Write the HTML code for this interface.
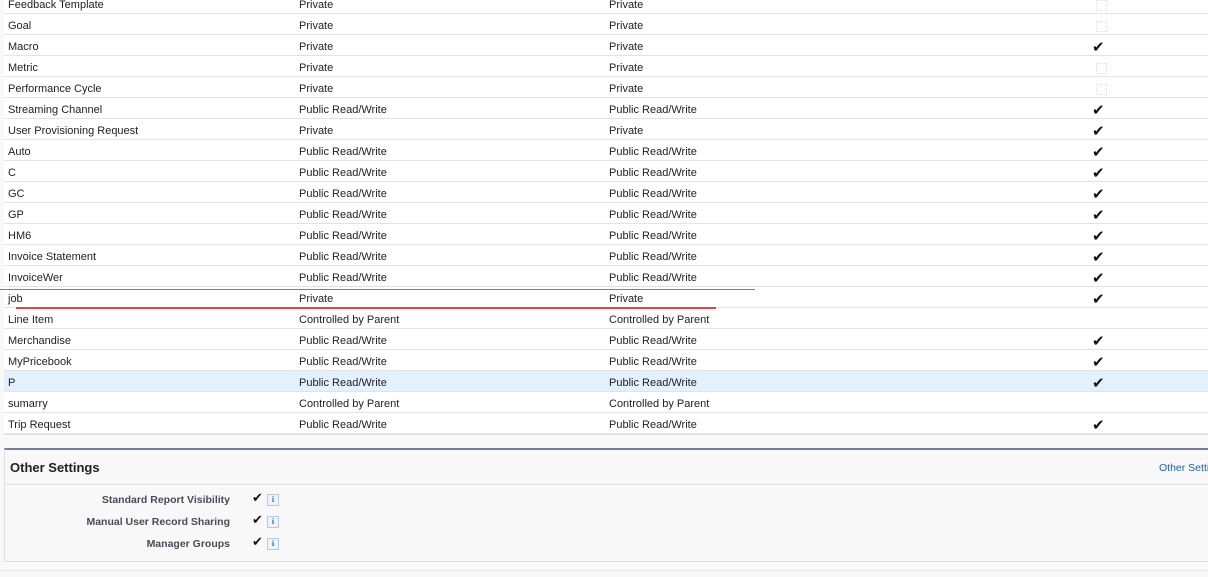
<!DOCTYPE html>
<html><head><meta charset="utf-8"><style>
body{margin:0;width:1208px;height:577px;background:#f8f8f8;font-family:"Liberation Sans",Arial,sans-serif;font-size:11px;color:#222;position:relative;overflow:hidden}
.tbl{position:absolute;left:4px;top:-8px;width:1210px;height:442px;background:#fff;border-left:1px solid #e0e0e0;border-bottom:1px solid #e0e0e0}
.r{position:absolute;left:4px;width:1210px;height:20px;border-bottom:1px solid #e3e3e3;background:#fff}
.r span{position:absolute;top:6px}
.a{left:4px}.b{left:295px}.c{left:605px}
.ck{position:absolute;left:1088px;top:3px;font-size:15px;color:#111;font-style:normal;font-family:"DejaVu Sans",sans-serif}
.bx{position:absolute;left:1092px;top:7px;width:9px;height:9px;border:1px dotted #ddd}
.os{position:absolute;left:4px;top:448px;width:1210px;height:111px;background:#f8f8f8;border-top:2px solid #747e96;border-left:1px solid #e0e0e0;border-bottom:1px solid #ddd}
.oh{position:absolute;left:0;top:0;width:100%;height:34px;border-bottom:1px solid #dedede}
.lbl{position:absolute;left:0;width:225px;text-align:right;font-weight:bold;color:#4a4a56;font-size:10.5px;white-space:nowrap}
.i{position:absolute;width:10px;height:10px;border:1px solid #b8c8dc;background:#eef4fb;color:#1a6ad4;font-size:8px;font-weight:bold;text-align:center;line-height:10px;font-family:"Liberation Serif",serif}
.cm{position:absolute;left:247px;font-size:13px;font-style:normal;font-family:'DejaVu Sans',sans-serif;color:#111}
</style></head><body>
<div class="tbl"></div>
<div class="r" style="top:-7px"><span class="a">Feedback Template</span><span class="b">Private</span><span class="c">Private</span><i class="bx"></i></div>
<div class="r" style="top:14px"><span class="a">Goal</span><span class="b">Private</span><span class="c">Private</span><i class="bx"></i></div>
<div class="r" style="top:35px"><span class="a">Macro</span><span class="b">Private</span><span class="c">Private</span><i class="ck">✔</i></div>
<div class="r" style="top:56px"><span class="a">Metric</span><span class="b">Private</span><span class="c">Private</span><i class="bx"></i></div>
<div class="r" style="top:77px"><span class="a">Performance Cycle</span><span class="b">Private</span><span class="c">Private</span><i class="bx"></i></div>
<div class="r" style="top:98px"><span class="a">Streaming Channel</span><span class="b">Public Read/Write</span><span class="c">Public Read/Write</span><i class="ck">✔</i></div>
<div class="r" style="top:119px"><span class="a">User Provisioning Request</span><span class="b">Private</span><span class="c">Private</span><i class="ck">✔</i></div>
<div class="r" style="top:140px"><span class="a">Auto</span><span class="b">Public Read/Write</span><span class="c">Public Read/Write</span><i class="ck">✔</i></div>
<div class="r" style="top:161px"><span class="a">C</span><span class="b">Public Read/Write</span><span class="c">Public Read/Write</span><i class="ck">✔</i></div>
<div class="r" style="top:182px"><span class="a">GC</span><span class="b">Public Read/Write</span><span class="c">Public Read/Write</span><i class="ck">✔</i></div>
<div class="r" style="top:203px"><span class="a">GP</span><span class="b">Public Read/Write</span><span class="c">Public Read/Write</span><i class="ck">✔</i></div>
<div class="r" style="top:224px"><span class="a">HM6</span><span class="b">Public Read/Write</span><span class="c">Public Read/Write</span><i class="ck">✔</i></div>
<div class="r" style="top:245px"><span class="a">Invoice Statement</span><span class="b">Public Read/Write</span><span class="c">Public Read/Write</span><i class="ck">✔</i></div>
<div class="r" style="top:266px"><span class="a">InvoiceWer</span><span class="b">Public Read/Write</span><span class="c">Public Read/Write</span><i class="ck">✔</i></div>
<div class="r" style="top:287px"><span class="a">job</span><span class="b">Private</span><span class="c">Private</span><i class="ck">✔</i></div>
<div class="r" style="top:308px"><span class="a">Line Item</span><span class="b">Controlled by Parent</span><span class="c">Controlled by Parent</span></div>
<div class="r" style="top:329px"><span class="a">Merchandise</span><span class="b">Public Read/Write</span><span class="c">Public Read/Write</span><i class="ck">✔</i></div>
<div class="r" style="top:350px"><span class="a">MyPricebook</span><span class="b">Public Read/Write</span><span class="c">Public Read/Write</span><i class="ck">✔</i></div>
<div class="r" style="top:371px;background:#e3f1fc"><span class="a">P</span><span class="b">Public Read/Write</span><span class="c">Public Read/Write</span><i class="ck">✔</i></div>
<div class="r" style="top:392px"><span class="a">sumarry</span><span class="b">Controlled by Parent</span><span class="c">Controlled by Parent</span></div>
<div class="r" style="top:413px"><span class="a">Trip Request</span><span class="b">Public Read/Write</span><span class="c">Public Read/Write</span><i class="ck">✔</i></div>
<div style="position:absolute;left:0;top:289px;width:755px;height:1px;background:#c86060"></div>
<div style="position:absolute;left:16px;top:307px;width:700px;height:2px;background:#e04444"></div>
<div class="os">
 <div class="oh"><span style="position:absolute;left:5px;top:10px;font-size:13px;font-weight:bold;color:#222">Other Settings</span><span style="position:absolute;left:1154px;top:12px;font-size:10.5px;color:#1a5fb4;white-space:nowrap">Other Settings</span></div>
 <span class="lbl" style="top:44px">Standard Report Visibility</span>
 <span class="lbl" style="top:66px">Manual User Record Sharing</span>
 <span class="lbl" style="top:88px">Manager Groups</span>
 <i class="cm" style="top:41px">✔</i><b class="i" style="left:262px;top:44px">i</b>
 <i class="cm" style="top:63px">✔</i><b class="i" style="left:262px;top:66px">i</b>
 <i class="cm" style="top:85px">✔</i><b class="i" style="left:262px;top:88px">i</b>
</div>
<div style="position:absolute;left:0;top:570px;width:1208px;height:1px;background:#e4e4e4"></div>
</body></html>
